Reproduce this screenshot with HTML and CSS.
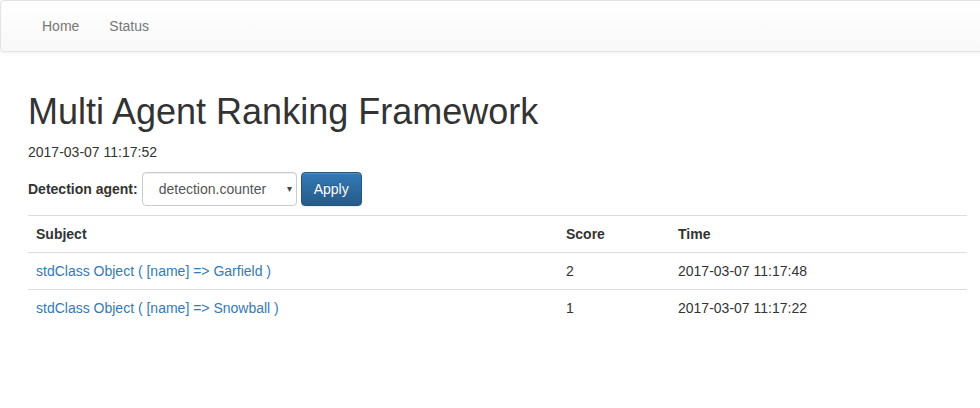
FILE: index.html
```html
<!DOCTYPE html>
<html lang="en">
<head>
<meta charset="utf-8">
<title>Multi Agent Ranking Framework</title>
<link rel="stylesheet" href="styles.css">
</head>
<body>
<nav class="navbar">
  <ul class="nav">
    <li><a href="#">Home</a></li>
    <li><a href="#">Status</a></li>
  </ul>
</nav>
<main class="container">
  <h1 class="title">Multi Agent Ranking Framework</h1>
  <p class="stamp">2017-03-07 11:17:52</p>
  <form class="filter">
    <label class="filter-label">Detection agent:</label>
    <div class="select">
      <span class="select-value">detection.counter</span>
      <span class="select-caret">&#9662;</span>
    </div>
    <button type="button" class="btn">Apply</button>
  </form>
  <table class="table">
    <colgroup>
      <col class="col-subject">
      <col class="col-score">
      <col class="col-time">
    </colgroup>
    <tbody>
      <tr><th>Subject</th><th>Score</th><th>Time</th></tr>
      <tr><td><a href="#">stdClass Object ( [name] =&gt; Garfield )</a></td><td>2</td><td>2017-03-07 11:17:48</td></tr>
      <tr><td><a href="#">stdClass Object ( [name] =&gt; Snowball )</a></td><td>1</td><td>2017-03-07 11:17:22</td></tr>
    </tbody>
  </table>
</main>
</body>
</html>
```
FILE: styles.css
```css
html, body {
  margin: 0;
  padding: 0;
  overflow-x: hidden;
}
body {
  font-family: "Liberation Sans", Arial, Helvetica, sans-serif;
  font-size: 14px;
  line-height: 20px;
  color: #333;
  background: #fff;
}
a {
  color: #337ab7;
  text-decoration: none;
}
.navbar {
  height: 50px;
  margin-right: -10px;
  margin-bottom: 20px;
  border: 1px solid #e3e3e3;
  border-radius: 4px;
  background-image: linear-gradient(to bottom, #fff 0, #f8f8f8 100%);
  box-shadow: inset 0 1px 0 rgba(255,255,255,.15), 0 1px 5px rgba(0,0,0,.075);
}
.nav {
  display: flex;
  list-style: none;
  margin: 0;
  padding: 0 0 0 26px;
}
.nav a {
  display: block;
  padding: 15px;
  line-height: 20px;
  color: #777;
}
.container {
  display: flow-root;
  padding: 0 13px 0 28px;
}
.title {
  font-size: 36px;
  font-weight: 500;
  line-height: 1.1;
  margin: 20px 0 10px;
}
.stamp {
  margin: 0 0 10px;
}
.filter {
  display: flex;
  align-items: center;
  margin: 0 0 9px;
}
.filter-label {
  font-weight: bold;
  margin-right: 4px;
}
.select {
  box-sizing: border-box;
  width: 155px;
  height: 34px;
  display: flex;
  align-items: center;
  justify-content: space-between;
  padding: 0 4px 0 16px;
  border: 1px solid #ccc;
  border-radius: 4px;
  background: #fff;
  color: #555;
  box-shadow: inset 0 1px 1px rgba(0,0,0,.075);
}
.select-caret {
  font-size: 10px;
  color: #444;
}
.btn {
  box-sizing: border-box;
  height: 34px;
  margin-left: 4px;
  padding: 6px 12px;
  font-family: inherit;
  font-size: 14px;
  line-height: 20px;
  color: #fff;
  border: 1px solid #245580;
  border-radius: 4px;
  background-image: linear-gradient(to bottom, #337ab7 0, #265a88 100%);
  box-shadow: inset 0 1px 0 rgba(255,255,255,.15), 0 1px 1px rgba(0,0,0,.075);
  text-shadow: 0 -1px 0 rgba(0,0,0,.2);
}
.table {
  width: 100%;
  border-collapse: collapse;
  border-spacing: 0;
  table-layout: fixed;
}
.col-subject { width: 530px; }
.col-score { width: 112px; }
.table th, .table td {
  padding: 8px;
  line-height: 20px;
  text-align: left;
  vertical-align: top;
  border-top: 1px solid #ddd;
}
.table th {
  font-weight: bold;
}
```
